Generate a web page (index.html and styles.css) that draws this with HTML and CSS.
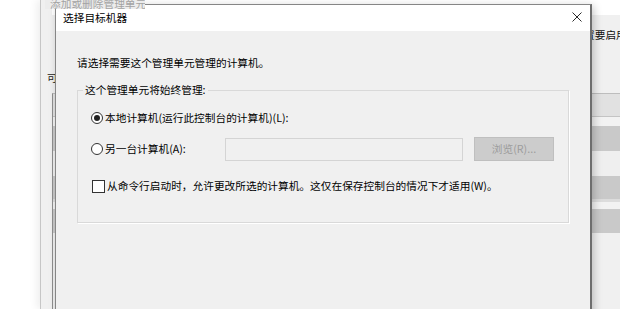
FILE: index.html
```html
<!DOCTYPE html>
<html lang="zh-CN">
<head>
<meta charset="utf-8">
<title>选择目标机器</title>
<link rel="stylesheet" href="styles.css">
</head>
<body>
<div class="desk">
  <div class="backwin">
    <div class="bw-side"><span class="bw-glyph">可</span></div>
    <div class="bw-main">
      <div class="bw-top"></div>
      <div class="bw-hint">置要启用</div>
      <div class="bw-list">
        <div class="st st-a"></div>
        <div class="st st-line"></div>
        <div class="st st-b"></div>
        <div class="st st-c"></div>
        <div class="st st-d"></div>
        <div class="st st-e"></div>
        <div class="st st-f"></div>
        <div class="st st-g"></div>
        <div class="st st-h"></div>
      </div>
    </div>
  </div>

  <div class="dialog">
    <div class="titlebar">
      <span class="title">选择目标机器</span>
      <svg class="close" width="10" height="10" viewBox="0 0 10 10">
        <path d="M0.5 0.5 L9.5 9.5 M9.5 0.5 L0.5 9.5" stroke="#2b2b2b" stroke-width="1" fill="none"/>
      </svg>
    </div>
    <div class="dbody">
      <div class="prompt">请选择需要这个管理单元管理的计算机。</div>
      <fieldset class="group">
        <legend class="legend">这个管理单元将始终管理:</legend>
        <div class="group-inner">
          <div class="row row1">
            <span class="radio on"></span>
            <span class="lbl">本地计算机(运行此控制台的计算机)(L):</span>
          </div>
          <div class="row row2">
            <div class="r2-label">
              <span class="radio"></span>
              <span class="lbl">另一台计算机(A):</span>
            </div>
            <div class="tbox"></div>
            <div class="btn">浏览(R)...</div>
          </div>
          <div class="row row3">
            <span class="check"></span>
            <span class="lbl lbl-c">从命令行启动时，允许更改所选的计算机。这仅在保存控制台的情况下才适用(W)。</span>
          </div>
        </div>
      </fieldset>
    </div>
  </div>

  <div class="ghost">添加或删除管理单元</div>
</div>
</body>
</html>
```

FILE: styles.css
```css
* { box-sizing: border-box; }
html, body { margin: 0; padding: 0; }
body {
  width: 620px;
  height: 309px;
  overflow: hidden;
  background: #ffffff;
  font-family: "Noto Sans CJK SC", "Microsoft YaHei", sans-serif;
  font-size: 10.7px;
  color: #000;
}
.desk {
  position: relative;
  width: 620px;
  height: 309px;
  overflow: hidden;
}

/* background window */
.backwin {
  position: absolute;
  left: 40px;
  top: 0;
  width: 600px;
  height: 309px;
  background: #f0f0f0;
  border-left: 1px solid #c6c6c6;
  box-shadow: -3px 0 8px rgba(0, 0, 0, 0.07);
  display: flex;
}
.bw-side {
  width: 11px;
  flex: none;
  padding-top: 72px;
  padding-left: 6px;
  white-space: nowrap;
  line-height: 12px;
}
.bw-glyph { color: #222; }
.bw-main {
  flex: 1;
  display: flex;
  flex-direction: column;
}
.bw-top { height: 15px; background: #fff; }
.bw-hint {
  margin-top: 14px;
  padding-left: 532px;
  line-height: 12px;
  white-space: nowrap;
  color: #111;
}
.bw-list {
  margin-top: 52px;
  border-left: 1px solid #8f8f8f;
  border-top: 1px solid #bdbdbd;
  display: flex;
  flex-direction: column;
  flex: 1;
}
.st { flex: none; }
.st-a { height: 22px; background: #e1e1e1; }
.st-line { height: 1px; background: #c4c4c4; }
.st-b { height: 9px; background: #f2f2f2; }
.st-c { height: 25px; background: #c9c9c9; }
.st-d { height: 25px; background: #efefef; }
.st-e { height: 23px; background: #c9c9c9; }
.st-f { height: 3px; background: #dcdcdc; }
.st-g { height: 7px; background: #f2f2f2; }
.st-h { height: 24px; background: #c9c9c9; }

/* ghost title of the back window */
.ghost {
  position: absolute;
  left: 45px;
  top: 0;
  width: 100px;
  height: 9px;
  overflow: hidden;
  background: #ececec;
  color: #a3a3a3;
  padding-left: 5px;
  line-height: 8px;
  white-space: nowrap;
}

/* dialog */
.dialog {
  position: absolute;
  left: 55px;
  top: 4px;
  width: 537px;
  height: 330px;
  background: #f0f0f0;
  border: 1px solid #868686;
  border-right: 2px solid #6e6e6e;
  box-shadow: 2px 2px 8px rgba(0, 0, 0, 0.22);
}
.titlebar {
  height: 26px;
  background: #fff;
  display: flex;
  justify-content: space-between;
  align-items: center;
  padding-left: 7px;
}
.title { line-height: 14px; }
.close {
  align-self: flex-start;
  margin-top: 7px;
  margin-right: 8px;
}
.dbody {
  padding: 25px 0 0 21px;
}
.prompt { line-height: 14px; }

.group {
  margin: 13px 0 0 0;
  padding: 0;
  width: 492px;
  min-inline-size: 0;
  border: 1px solid #d9d9d9;
  box-shadow: 1px 1px 0 #ffffff;
}
.legend {
  margin-left: 5px;
  padding: 0 2px;
  line-height: 14px;
}
.group-inner {
  padding: 12px 0 28px 13px;
}
.row {
  display: flex;
  align-items: center;
}
.row1 { height: 17px; }
.row2 {
  margin-top: 11px;
  height: 24px;
}
.r2-label {
  width: 134px;
  flex: none;
  display: flex;
  align-items: center;
}
.row3 { margin-top: 17px; height: 16px; }

.radio {
  width: 12px;
  height: 12px;
  flex: none;
  border: 1px solid #333;
  border-radius: 50%;
  background: #fff;
  display: flex;
  align-items: center;
  justify-content: center;
}
.radio.on::after {
  content: "";
  width: 6px;
  height: 6px;
  border-radius: 50%;
  background: #222;
}
.lbl {
  margin-left: 2px;
  line-height: 14px;
  white-space: nowrap;
}
.check {
  width: 13px;
  height: 13px;
  flex: none;
  margin-left: 1px;
  border: 1px solid #333;
  background: #fff;
}
.lbl-c { margin-left: 2px; }

.tbox {
  width: 238px;
  flex: none;
  height: 23px;
  margin-top: 1px;
  border: 1px solid #d4d4d4;
  background: #f0f0f0;
}
.btn {
  width: 80px;
  flex: none;
  margin-left: 11px;
  height: 24px;
  border: 1px solid #bfbfbf;
  background: #cccccc;
  color: #9c9c9c;
  display: flex;
  align-items: center;
  justify-content: center;
  line-height: 14px;
}
```
